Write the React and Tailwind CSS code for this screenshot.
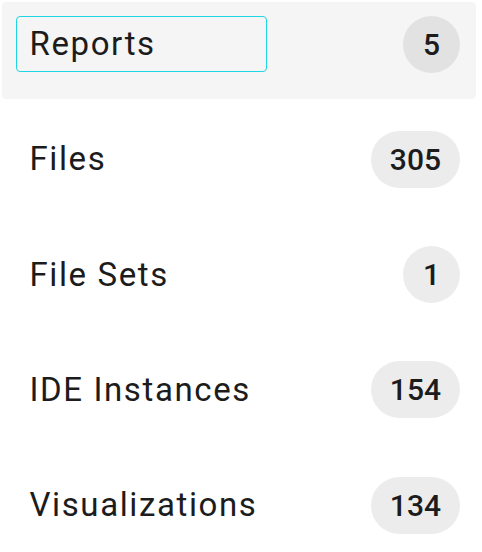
import React from "react";

const items = [
  { label: "Reports", count: 5, active: true },
  { label: "Files", count: 305 },
  { label: "File Sets", count: 1 },
  { label: "IDE Instances", count: 154 },
  { label: "Visualizations", count: 134 },
];

export default function App() {
  return (
    <div className="w-[482px] h-[552px] bg-white pt-[2px] pl-[2px] pr-[6px] font-['Roboto',sans-serif]">
      {items.map((item) => (
        <div
          key={item.label}
          className={
            "flex items-start justify-between h-[97px] mb-[18.25px] pl-[14px] pr-[16px] pt-[13.5px] rounded-[4px] " +
            (item.active ? "bg-[#f5f5f5]" : "")
          }
        >
          <div
            className={
              "flex items-center h-[56px] pl-[12.5px] rounded-[4px] border-[1.5px] " +
              (item.active ? "border-[#1fd6e6] w-[251px]" : "border-transparent")
            }
          >
            <span className="text-[33px] leading-none tracking-[1.6px] text-[#1c1c1c]">{item.label}</span>
          </div>
          <div className="flex items-center justify-center h-[57px] min-w-[57px] px-[19px] rounded-full bg-black/[0.075] text-[30px] font-medium text-[#1c1c1c]">
            {item.count}
          </div>
        </div>
      ))}
    </div>
  );
}
